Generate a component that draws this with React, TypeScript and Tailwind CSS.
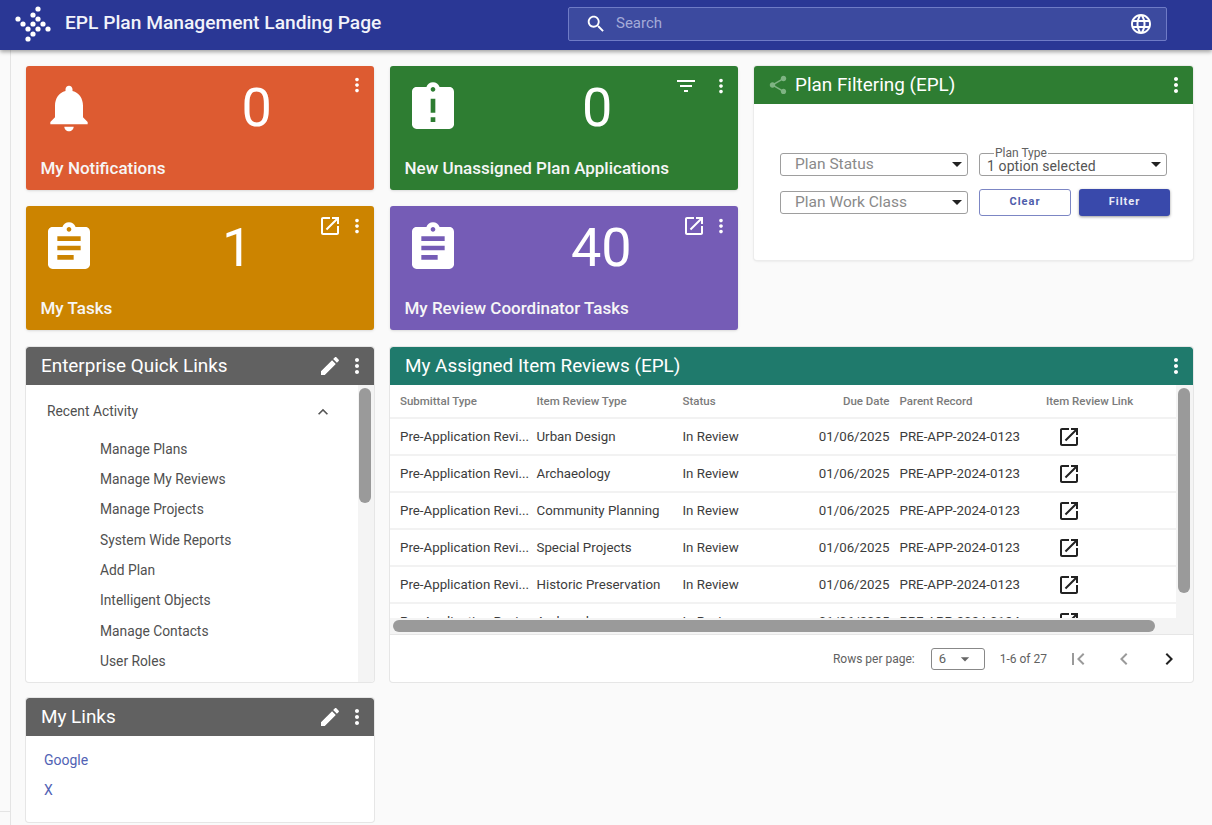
import React from 'react';

const paths = {
  bell: 'M12 22c1.1 0 2-.9 2-2h-4c0 1.1.89 2 2 2zm6-6v-5c0-3.07-1.64-5.64-4.5-6.32V4c0-.83-.67-1.5-1.5-1.5s-1.5.67-1.5 1.5v.68C7.63 5.36 6 7.92 6 11v5l-2 2v1h16v-1l-2-2z',
  assignment: 'M19 3h-4.18C14.4 1.84 13.3 1 12 1c-1.3 0-2.4.84-2.82 2H5c-1.1 0-2 .9-2 2v14c0 1.1.9 2 2 2h14c1.1 0 2-.9 2-2V5c0-1.1-.9-2-2-2zm-7 0c.55 0 1 .45 1 1s-.45 1-1 1-1-.45-1-1 .45-1 1-1zm2 14H7v-2h7v2zm3-4H7v-2h10v2zm0-4H7V7h10v2z',
  late: 'M19 3h-4.18C14.4 1.84 13.3 1 12 1c-1.3 0-2.4.84-2.82 2H5c-1.1 0-2 .9-2 2v14c0 1.1.9 2 2 2h14c1.1 0 2-.9 2-2V5c0-1.1-.9-2-2-2zm-6 15h-2v-2h2v2zm0-4h-2V8h2v6zm-1-9c-.55 0-1-.45-1-1s.45-1 1-1 1 .45 1 1-.45 1-1 1z',
  open: 'M19 19H5V5h7V3H5c-1.11 0-2 .9-2 2v14c0 1.1.89 2 2 2h14c1.1 0 2-.9 2-2v-7h-2v7zM14 3v2h3.59l-9.83 9.83 1.41 1.41L19 6.41V10h2V3h-7z',
  more: 'M12 8c1.1 0 2-.9 2-2s-.9-2-2-2-2 .9-2 2 .9 2 2 2zm0 2c-1.1 0-2 .9-2 2s.9 2 2 2 2-.9 2-2-.9-2-2-2zm0 6c-1.1 0-2 .9-2 2s.9 2 2 2 2-.9 2-2-.9-2-2-2z',
  filter: 'M10 18h4v-2h-4v2zM3 6v2h18V6H3zm3 7h12v-2H6v2z',
  edit: 'M3 17.25V21h3.75L17.81 9.94l-3.75-3.75L3 17.25zM20.71 7.04c.39-.39.39-1.02 0-1.41l-2.34-2.34c-.39-.39-1.02-.39-1.41 0l-1.83 1.83 3.75 3.75 1.83-1.83z',
  share: 'M18 16.08c-.76 0-1.44.3-1.96.77L8.91 12.7c.05-.23.09-.46.09-.7s-.04-.47-.09-.7l7.05-4.11c.54.5 1.25.81 2.04.81 1.66 0 3-1.34 3-3s-1.34-3-3-3-3 1.34-3 3c0 .24.04.47.09.7L8.04 9.81C7.5 9.31 6.79 9 6 9c-1.66 0-3 1.34-3 3s1.34 3 3 3c.79 0 1.5-.31 2.04-.81l7.12 4.16c-.05.21-.08.43-.08.65 0 1.61 1.31 2.92 2.92 2.92 1.61 0 2.92-1.31 2.92-2.92s-1.31-2.92-2.92-2.92z',
  search: 'M15.5 14h-.79l-.28-.27C15.41 12.59 16 11.11 16 9.5 16 5.91 13.09 3 9.5 3S3 5.91 3 9.5 5.91 16 9.5 16c1.61 0 3.09-.59 4.23-1.57l.27.28v.79l5 4.99L20.49 19l-4.99-5zm-6 0C7.01 14 5 11.99 5 9.5S7.01 5 9.5 5 14 7.01 14 9.5 11.99 14 9.5 14z',
  globe: 'M11.99 2C6.47 2 2 6.48 2 12s4.47 10 9.99 10C17.52 22 22 17.52 22 12S17.52 2 11.99 2zm6.93 6h-2.95c-.32-1.25-.78-2.45-1.38-3.56 1.84.63 3.37 1.91 4.33 3.56zM12 4.04c.83 1.2 1.48 2.53 1.91 3.96h-3.82c.43-1.43 1.08-2.76 1.91-3.96zM4.26 14C4.1 13.36 4 12.69 4 12s.1-1.36.26-2h3.38c-.08.66-.14 1.32-.14 2 0 .68.06 1.34.14 2H4.26zm.82 2h2.95c.32 1.25.78 2.45 1.38 3.56-1.84-.63-3.37-1.9-4.33-3.56zm2.95-8H5.08c.96-1.66 2.49-2.93 4.33-3.56C8.81 5.55 8.35 6.75 8.03 8zM12 19.96c-.83-1.2-1.48-2.53-1.91-3.96h3.82c-.43 1.43-1.08 2.76-1.91 3.96zM14.34 14H9.66c-.09-.66-.16-1.32-.16-2 0-.68.07-1.35.16-2h4.68c.09.65.16 1.32.16 2 0 .68-.07 1.34-.16 2zm.25 5.56c.6-1.11 1.06-2.31 1.38-3.56h2.95c-.96 1.65-2.49 2.93-4.33 3.56zM16.36 14c.08-.66.14-1.32.14-2 0-.68-.06-1.34-.14-2h3.38c.16.64.26 1.31.26 2s-.1 1.36-.26 2h-3.38z',
  up: 'M7.41 15.41L12 10.83l4.59 4.58L18 14l-6-6-6 6z',
  first: 'M18.41 16.59L13.82 12l4.59-4.59L17 6l-6 6 6 6zM6 6h2v12H6z',
  prev: 'M15.41 7.41L14 6l-6 6 6 6 1.41-1.41L10.83 12z',
  next: 'M10 6L8.59 7.41 13.17 12l-4.58 4.59L10 18l6-6z',
  caret: 'M7 10l5 5 5-5z',
};

const Icon = ({ name, className }: { name: keyof typeof paths; className: string }) => (
  <svg viewBox="0 0 24 24" fill="currentColor" className={className}>
    <path d={paths[name]} />
  </svg>
);

const logoDots = [[37, 8], [32, 14], [17, 18], [37, 18], [22, 23], [32, 23], [42, 23], [27, 28], [37, 28], [47, 28], [32, 33], [27, 38]];

const Logo = () => (
  <svg viewBox="14 4 36 38" className="w-[36px] h-[38px] shrink-0 text-white" fill="currentColor">
    {logoDots.map(([cx, cy]) => <circle key={`${cx}-${cy}`} cx={cx} cy={cy} r="2.6" />)}
  </svg>
);

interface StatCardProps {
  title: string;
  value: string;
  color: string;
  icon: keyof typeof paths;
  action?: 'open' | 'filter';
}

const StatCard = ({ title, value, color, icon, action }: StatCardProps) => (
  <div className={`${color} h-[124px] rounded-[3px] text-white flex flex-col pl-[14.5px] pr-[6px] pt-[5px] shadow-sm`}>
    <div className="flex items-start h-[84px]">
      <Icon name={icon} className="w-[56px] h-[56px] mt-[9px] shrink-0" />
      <div className={`flex-1 text-center text-[54px] leading-[68px] font-normal pl-[71px] mt-[3px] ${action ? 'pr-[11px]' : ''}`}>{value}</div>
      <div className={`flex items-center mt-[3px] ${action === 'filter' ? 'gap-[12px]' : 'gap-[4px]'}`}>
        {action && <Icon name={action} className="w-[24px] h-[24px]" />}
        <Icon name="more" className="w-[22px] h-[22px]" />
      </div>
    </div>
    <div className="text-[17px] leading-[24px] font-medium mt-[1px] text-[#f6f6f6]">{title}</div>
  </div>
);

const PanelHeader = ({ title, color, children }: { title: string; color: string; children?: React.ReactNode }) => (
  <div className={`${color} h-[38px] rounded-t-[3px] flex items-center pl-[15px] pr-[5px] text-white shrink-0`}>
    {children}
    <span className="text-[18.9px] font-normal flex-1">{title}</span>
  </div>
);

const HeaderActions = ({ edit }: { edit?: boolean }) => (
  <>
    {edit && <Icon name="edit" className="w-[24px] h-[24px] mr-[3px] order-1" />}
    <Icon name="more" className="w-[24px] h-[24px] order-2" />
  </>
);

const SelectBox = ({ label, value }: { label?: string; value: string }) => (
  <div className="relative h-[23px] border border-[#9e9e9e] rounded-[3px] flex items-center justify-between pr-[5px] bg-white">
    {label ? (
      <>
        <span className="absolute left-[14px] -top-[6px] bg-white px-[1px] text-[12px] leading-[10px] text-[#616161]">{label}</span>
        <span className="pl-[7px] text-[14px] leading-[12px] mt-[2px] text-[#555] tracking-[0.1px]">{value}</span>
      </>
    ) : (
      <span className="pl-[14px] text-[15.5px] text-[#8a8a8a]">{value}</span>
    )}
    <span className="w-0 h-0 border-x-[5px] border-x-transparent border-t-[5px] border-t-[#222]" />
  </div>
);

const reviewRows = ['Urban Design', 'Archaeology', 'Community Planning', 'Special Projects', 'Historic Preservation', 'Archaeology'];
const quickLinks = ['Manage Plans', 'Manage My Reviews', 'Manage Projects', 'System Wide Reports', 'Add Plan', 'Intelligent Objects', 'Manage Contacts', 'User Roles'];
const rowGrid = 'grid grid-cols-[136.5px_146px_120px_87px_156.5px_auto] pl-[10px] items-center';

export default function App() {
  return (
    <div className="relative h-[825px] overflow-hidden bg-[#fafafa] font-['Roboto',sans-serif]">
      <header className="relative z-10 h-[50px] bg-[#2a3795] shadow-[0_2px_4px_rgba(0,0,0,0.35)] flex items-center pl-[15px] pr-[45px] pb-[3px] text-white">
        <Logo />
        <h1 className="ml-[14px] text-[19.2px] font-medium text-[#f2f3fa]">EPL Plan Management Landing Page</h1>
        <div className="ml-auto w-[599px] h-[34px] bg-[#3c4a9f] border border-[#6f7bc6] rounded-[2px] flex items-center pl-[16px] pr-[13px]">
          <Icon name="search" className="w-[22px] h-[22px] text-white" />
          <span className="ml-[9px] text-[15px] text-[#a4abd8] flex-1">Search</span>
          <Icon name="globe" className="w-[24px] h-[24px] text-white" />
        </div>
      </header>

      <div className="flex h-[775px]">
        <aside className="w-[11px] shrink-0 border-r border-[#e4e4e4] flex flex-col justify-end pb-[13px]">
          <div className="border-t border-[#e4e4e4]" />
        </aside>
        <main className="pl-[15px] pt-[16px] grid grid-cols-[348px_348px_439px] grid-rows-[124px_125px_335px_124px] gap-x-[16px] gap-y-[16px] content-start">
          <StatCard title="My Notifications" value="0" color="bg-[#dd5b31]" icon="bell" />
          <StatCard title="New Unassigned Plan Applications" value="0" color="bg-[#2e7d32]" icon="late" action="filter" />

          <section className="row-span-2 self-start h-[194px] bg-white rounded-[3px] ring-1 ring-[#ececec] shadow-sm flex flex-col">
            <PanelHeader title="Plan Filtering (EPL)" color="bg-[#2e7d32]">
              <Icon name="share" className="w-[22px] h-[22px] text-[#7fb483] mr-[6px] -ml-[2px]" />
              <Icon name="more" className="w-[24px] h-[24px] order-2" />
            </PanelHeader>
            <div className="pl-[26px] pr-[22px] pt-[49px] grid grid-cols-[188px_188px] gap-x-[11px] gap-y-[15px]">
              <SelectBox value="Plan Status" />
              <SelectBox label="Plan Type" value="1 option selected" />
              <SelectBox value="Plan Work Class" />
              <div className="flex gap-[8px] -my-[2px] w-[191px]">
                <button className="w-[92px] h-[27px] border border-[#7c86c4] rounded-[3px] text-[11px] font-bold tracking-[1px] text-[#4f5dab] bg-white">Clear</button>
                <button className="w-[91px] h-[27px] rounded-[3px] text-[11px] font-bold tracking-[1px] text-[#e8eaf6] bg-[#3949ab] shadow-[0_1px_3px_rgba(0,0,0,0.4)]">Filter</button>
              </div>
            </div>
          </section>

          <StatCard title="My Tasks" value="1" color="bg-[#cc8400]" icon="assignment" action="open" />
          <StatCard title="My Review Coordinator Tasks" value="40" color="bg-[#755cb6]" icon="assignment" action="open" />

          <section className="bg-white rounded-[3px] ring-1 ring-[#e6e6e6] flex flex-col overflow-hidden">
            <PanelHeader title="Enterprise Quick Links" color="bg-[#616161]"><HeaderActions edit /></PanelHeader>
            <div className="flex flex-1 min-h-0">
              <div className="flex-1 overflow-hidden text-[#505050] text-[13.8px]">
                <div className="h-[49px] flex items-center justify-between pl-[21px] pr-[25px] pt-[4px]">
                  <span>Recent Activity</span>
                  <Icon name="up" className="w-[20px] h-[20px] text-[#555]" />
                </div>
                {quickLinks.map(link => (
                  <div key={link} className="h-[30.3px] flex items-center pl-[74px]">{link}</div>
                ))}
              </div>
              <div className="w-[16px] bg-[#f4f4f4] pl-[1px] pr-[3px] pt-[3px] shrink-0">
                <div className="h-[115px] rounded-full bg-[#9a9a9a]" />
              </div>
            </div>
          </section>

          <section className="col-span-2 bg-white rounded-[3px] ring-1 ring-[#e6e6e6] flex flex-col overflow-hidden">
            <PanelHeader title="My Assigned Item Reviews (EPL)" color="bg-[#1f7a6c]"><HeaderActions /></PanelHeader>
            <div className="flex h-[249px] shrink-0">
              <div className="flex-1 min-w-0 flex flex-col">
                <div className="h-[233px] overflow-hidden">
                  <div className={`${rowGrid} h-[34px] pt-[2px] border-b-2 border-[#f2f2f2] text-[11.5px] font-medium text-[#7b7b7b]`}>
                    <span>Submittal Type</span>
                    <span>Item Review Type</span>
                    <span>Status</span>
                    <span className="text-right">Due Date</span>
                    <span className="pl-[10px]">Parent Record</span>
                    <span className="whitespace-nowrap">Item Review Link</span>
                  </div>
                  {reviewRows.map((type, i) => (
                    <div key={i} className={`${rowGrid} h-[37px] border-b-2 border-[#f2f2f2] text-[13.3px] text-[#3c3c3c]`}>
                      <span className="whitespace-nowrap">Pre-Application Revi...</span>
                      <span className="whitespace-nowrap">{type}</span>
                      <span>In Review</span>
                      <span className="text-right">01/06/2025</span>
                      <span className="pl-[10px] whitespace-nowrap">PRE-APP-2024-012{i === 5 ? '4' : '3'}</span>
                      <Icon name="open" className="ml-[11px] w-[24px] h-[24px] text-[#222]" />
                    </div>
                  ))}
                </div>
                <div className="h-[16px] bg-[#f4f4f4] pl-[3px] py-[2px]">
                  <div className="w-[762px] h-full rounded-full bg-[#9a9a9a]" />
                </div>
              </div>
              <div className="w-[17px] bg-[#f4f4f4] pl-[2px] pr-[3px] pt-[3px] shrink-0">
                <div className="h-[205px] rounded-full bg-[#9a9a9a]" />
              </div>
            </div>
            <div className="flex-1 border-t border-[#e6e6e6] flex items-center justify-end text-[12px] text-[#616161] pr-[12px]">
              <span>Rows per page:</span>
              <div className="ml-[16px] w-[54px] h-[22px] border border-[#888] rounded-[3px] flex items-center justify-between pl-[7px] pr-[9px] text-[13px]">
                6
                <Icon name="caret" className="w-[20px] h-[20px] text-[#666]" />
              </div>
              <span className="ml-[15px]">1-6 of 27</span>
              <Icon name="first" className="ml-[19px] w-[24px] h-[24px] text-[#9a9a9a]" />
              <Icon name="prev" className="ml-[22px] w-[24px] h-[24px] text-[#9a9a9a]" />
              <Icon name="next" className="ml-[21px] w-[24px] h-[24px] text-[#222]" />
            </div>
          </section>

          <section className="bg-white rounded-[3px] ring-1 ring-[#e6e6e6] flex flex-col overflow-hidden">
            <PanelHeader title="My Links" color="bg-[#616161]"><HeaderActions edit /></PanelHeader>
            <div className="pl-[18px] pt-[9px] text-[14px] text-[#5162b4]">
              <div className="h-[30px] flex items-center">Google</div>
              <div className="h-[30px] flex items-center">X</div>
            </div>
          </section>
        </main>
      </div>
    </div>
  );
}
